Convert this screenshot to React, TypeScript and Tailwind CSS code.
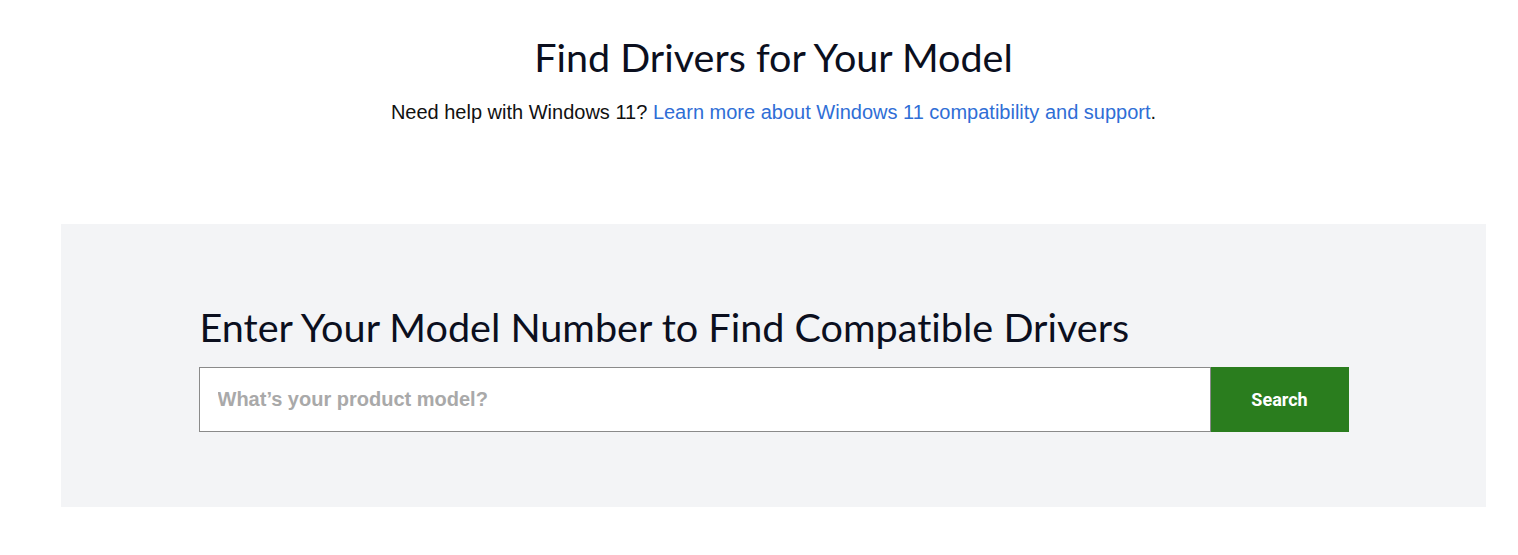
import React, { useState } from 'react';

export default function App() {
  const [model, setModel] = useState('');

  return (
    <div className="min-h-[555px] w-full bg-white">
      {/* content is centered slightly right of the window centre, as in the original page */}
      <div className="pl-[29px]">
        <div className="pt-[33px] text-center">
          <h1 className="text-[39.5px] leading-[48px] text-[#0b0f1e] font-['Lato',sans-serif] font-normal [font-variant-ligatures:none]">
            Find Drivers for Your Model
          </h1>
          <p className="mt-[18px] text-[20px] leading-[26px] text-[#111] font-['Liberation_Sans',Arial,sans-serif]">
            Need help with Windows 11?{' '}
            <a href="#" className="text-[#2f6ed6]">
              Learn more about Windows 11 compatibility and support
            </a>
            .
          </p>
        </div>

        {/* Search panel */}
        <div className="mx-[32px] mt-[99px] bg-[#f3f4f6] pt-[79px] pb-[75px]">
          <div className="mx-auto w-[1150px]">
            <h2 className="text-[39.6px] leading-[48px] text-[#0b0f1e] font-['Lato',sans-serif] font-normal pl-[1px] [font-variant-ligatures:none]">
              Enter Your Model Number to Find Compatible Drivers
            </h2>
            <form
              className="mt-[16px] flex h-[65px]"
              onSubmit={(e) => e.preventDefault()}
            >
              <input
                value={model}
                onChange={(e) => setModel(e.target.value)}
                placeholder="What’s your product model?"
                className="h-full flex-1 border border-[#8a8a8a] bg-white px-[18px] text-[20px] font-bold text-[#333] placeholder:text-[#a9a9a9] outline-none font-['Liberation_Sans',Arial,sans-serif]"
              />
              <button
                type="submit"
                className="h-full w-[138px] bg-[#2a7d1e] text-[18px] font-bold text-white font-['Roboto',sans-serif]"
              >
                Search
              </button>
            </form>
          </div>
        </div>
      </div>
    </div>
  );
}
